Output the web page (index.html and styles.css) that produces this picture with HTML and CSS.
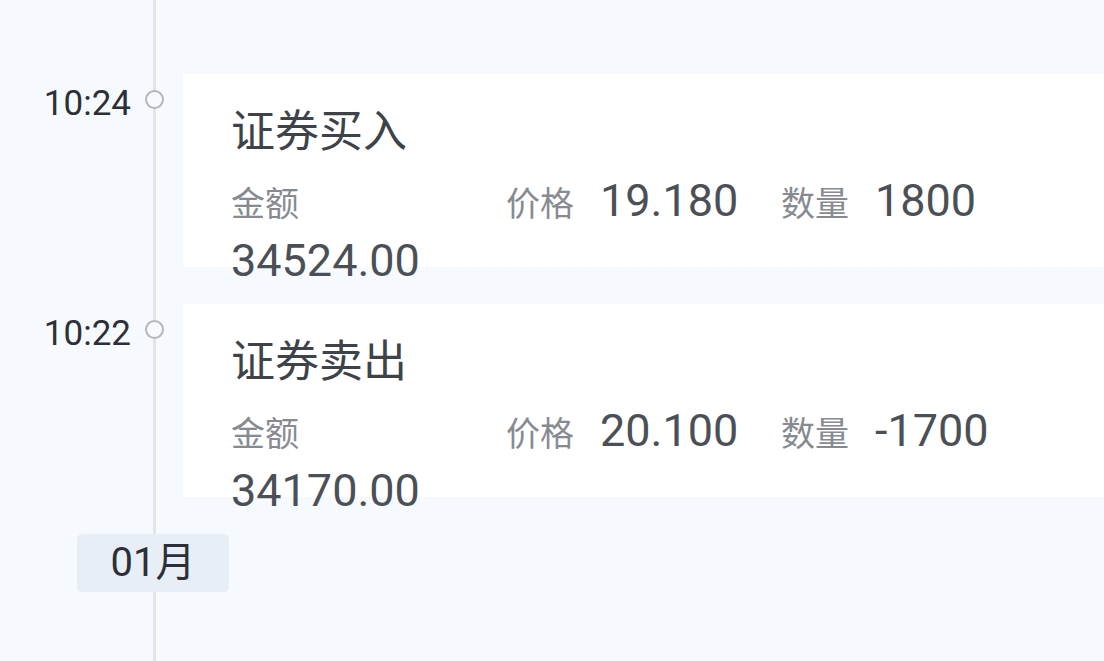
FILE: index.html
```html
<!DOCTYPE html>
<html lang="zh-CN">
<head>
<meta charset="utf-8">
<link rel="stylesheet" href="styles.css">
</head>
<body>
<div class="timeline">
  <div class="entry">
    <div class="time">10:24</div>
    <div class="dot"></div>
    <div class="card">
      <div class="title">证券买入</div>
      <div class="fields">
        <div class="field"><span class="label">金额</span><span class="value">34524.00</span></div>
        <div class="field"><span class="label">价格</span><span class="value">19.180</span></div>
        <div class="field"><span class="label">数量</span><span class="value">1800</span></div>
      </div>
    </div>
  </div>
  <div class="entry">
    <div class="time">10:22</div>
    <div class="dot"></div>
    <div class="card">
      <div class="title">证券卖出</div>
      <div class="fields">
        <div class="field"><span class="label">金额</span><span class="value">34170.00</span></div>
        <div class="field"><span class="label">价格</span><span class="value">20.100</span></div>
        <div class="field"><span class="label">数量</span><span class="value">-1700</span></div>
      </div>
    </div>
  </div>
  <div class="month">01月</div>
</div>
</body>
</html>
```
FILE: styles.css
```css
html, body {
  margin: 0;
  height: 100%;
}
body {
  background: #f6f9fd linear-gradient(#e2e4e9, #e2e4e9) no-repeat 153px 0 / 3px 100%;
  font-family: Roboto, "Noto Sans CJK SC", sans-serif;
  overflow: hidden;
}
.timeline {
  padding-top: 74px;
  display: flex;
  flex-direction: column;
  gap: 37px;
}
.entry {
  display: flex;
  align-items: flex-start;
}
.time {
  width: 131px;
  text-align: right;
  font-size: 35px;
  line-height: 40px;
  color: #2c3036;
  margin-top: 10px;
}
.dot {
  box-sizing: border-box;
  width: 19px;
  height: 19px;
  margin: 16px 0 0 14px;
  border: 2px solid #b5b7ba;
  border-radius: 50%;
  background: #f6f9fd;
}
.card {
  flex: 1;
  height: 193px;
  margin-left: 19px;
  background: #fff;
  padding: 33px 48px 0;
  box-sizing: border-box;
}
.title {
  font-size: 44px;
  line-height: 50px;
  color: #3d4349;
}
.fields {
  display: flex;
  align-items: baseline;
  margin-top: 16px;
}
.field {
  flex: 0 0 275px;
  display: flex;
  flex-wrap: wrap;
  align-items: baseline;
  column-gap: 26px;
  row-gap: 9px;
}
.label {
  font-size: 34px;
  line-height: 40px;
  color: #878b91;
}
.value {
  font-size: 45px;
  line-height: 56px;
  color: #4b5057;
}
.month {
  margin-left: 77px;
  width: 152px;
  height: 58px;
  border-radius: 5px;
  background: #e8eef5;
  color: #2c3036;
  font-size: 40px;
  line-height: 58px;
  text-align: center;
}
```
